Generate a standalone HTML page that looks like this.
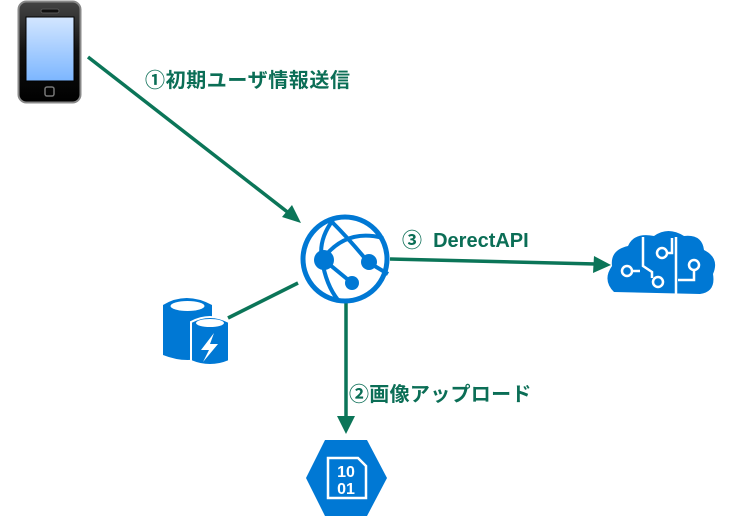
<!DOCTYPE html>
<html><head><meta charset="utf-8"><style>
html,body{margin:0;padding:0;background:#fff;width:733px;height:521px;overflow:hidden}
.t{position:absolute;font-family:"Liberation Sans","Noto Sans CJK JP",sans-serif;font-weight:bold;color:#0b6e56;white-space:nowrap;line-height:1}
</style></head><body>
<svg width="733" height="521" style="position:absolute;left:0;top:0">
<defs>
<linearGradient id="scr" x1="0" y1="0" x2="0" y2="1"><stop offset="0" stop-color="#d3e6ff"/><stop offset="1" stop-color="#7cb6ff"/></linearGradient>
<linearGradient id="body" x1="0" y1="0" x2="0" y2="1"><stop offset="0" stop-color="#444"/><stop offset="0.5" stop-color="#111"/><stop offset="1" stop-color="#000"/></linearGradient>
</defs>
<rect x="18.5" y="1.5" width="62" height="101" rx="8" fill="url(#body)" stroke="#888" stroke-width="2"/>
<rect x="26" y="17" width="48" height="64" fill="url(#scr)" stroke="#000"/>
<rect x="41" y="9" width="18" height="4" rx="2" fill="#111" stroke="#555"/>
<rect x="45" y="87" width="9" height="9" rx="2" fill="none" stroke="#777" stroke-width="1.5"/>
<g stroke="#0b7558" stroke-width="3.5" fill="none">
<line x1="88" y1="57" x2="290" y2="214"/>
<line x1="390" y1="259" x2="596" y2="264"/>
<line x1="298" y1="283" x2="228" y2="318"/>
<line x1="346" y1="303" x2="346" y2="418"/>
</g>
<g fill="#0b7558">
<polygon points="301,223 282,217 292,205"/>
<polygon points="611,265 594,256 593,273"/>
<polygon points="346,434 337,416 355,416"/>
</g>
<g fill="none" stroke="#0078d4">
<circle cx="345" cy="259" r="42" stroke-width="5"/>
<path d="M333 220 Q318 240 322 260 Q326 285 338 300" stroke-width="4"/>
<path d="M322 260 Q345 228 383 238" stroke-width="4"/>
<path d="M332 222 Q350 240 368 262" stroke-width="4"/>
<path d="M324 260 L352 283" stroke-width="4"/>
<path d="M368 262 L388 274" stroke-width="4"/>
</g>
<g fill="#0078d4"><circle cx="324" cy="260" r="10"/><circle cx="369" cy="262" r="8"/><circle cx="352" cy="283" r="7"/></g>
<path d="M614 292 Q602 280 612 266 Q610 250 628 246 Q634 232 654 236 Q668 226 684 236 Q702 234 704 250 Q720 258 713 274 Q716 292 700 294 Z" fill="#0078d4"/>
<g fill="none" stroke="#fff" stroke-width="2.5">
<path d="M643 237 V266 L652 272 V278"/>
<line x1="676" y1="237" x2="676" y2="296"/>
<circle cx="627" cy="271" r="5"/><line x1="632" y1="271" x2="640" y2="271"/>
<circle cx="662" cy="253" r="5"/><path d="M667 253 H672 V238"/>
<circle cx="658" cy="282" r="5"/>
<circle cx="694" cy="265" r="5"/><path d="M694 270 V280 H678"/>
</g>
<path d="M163 305 Q186 291 212 305 V355 Q188 365 163 355 Z" fill="#0078d4"/>
<ellipse cx="187.5" cy="306" rx="17" ry="5" fill="#fff"/>
<path d="M191 322 Q210 312 229 322 V361 Q210 369 191 361 Z" fill="#0078d4" stroke="#fff" stroke-width="2"/>
<ellipse cx="210" cy="323" rx="14" ry="4" fill="#fff"/>
<polygon points="214,333 201,350 209,350 203,362 218,344 210,344" fill="#fff"/>
<polygon points="325,440 367,440 387,478 367,516 325,516 306,478" fill="#0078d4"/>
<path d="M328 458 H358 L366 466 V498 H328 Z" fill="none" stroke="#fff" stroke-width="2.5"/>
<text x="346" y="477" fill="#fff" font-family="Liberation Sans" font-weight="bold" font-size="16" text-anchor="middle">10</text>
<text x="346" y="494" fill="#fff" font-family="Liberation Sans" font-weight="bold" font-size="16" text-anchor="middle">01</text>
</svg>
<div class="t" style="left:145px;top:71px;font-size:20px;letter-spacing:0.6px">①初期ユーザ情報送信</div>
<div class="t" style="left:402px;top:231px;font-size:20px">③&nbsp; DerectAPI</div>
<div class="t" style="left:349px;top:385px;font-size:20px;letter-spacing:0.3px">②画像アップロード</div>
</body></html>
